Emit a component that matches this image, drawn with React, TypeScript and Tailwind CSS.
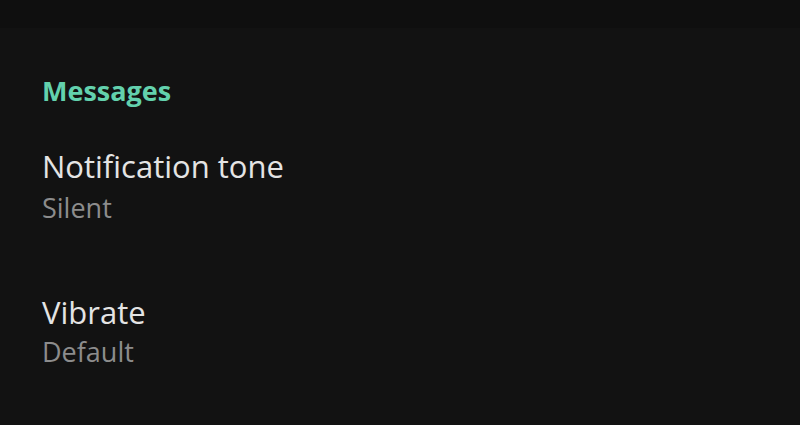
export default function App() {
  return (
    <div className="w-[800px] h-[425px] bg-[#121212] font-['Open_Sans',sans-serif] flex flex-col">
      <div className="h-[28px] bg-[#0f0f0f]" />
      <div className="px-[42px] pt-[47px] flex flex-col">
        <div className="text-[#63d1ad] text-[27px] font-bold leading-[32px]">Messages</div>
        <div className="mt-[41px] flex flex-col">
          <div className="text-[#e4e4e4] text-[31px] leading-[36px]">Notification tone</div>
          <div className="text-[#8c8c8c] text-[27px] leading-[32px] mt-[8px]">Silent</div>
        </div>
        <div className="mt-[70px] flex flex-col">
          <div className="text-[#e4e4e4] text-[31px] leading-[36px]">Vibrate</div>
          <div className="text-[#8c8c8c] text-[27px] leading-[32px] mt-[6px]">Default</div>
        </div>
      </div>
    </div>
  )
}
